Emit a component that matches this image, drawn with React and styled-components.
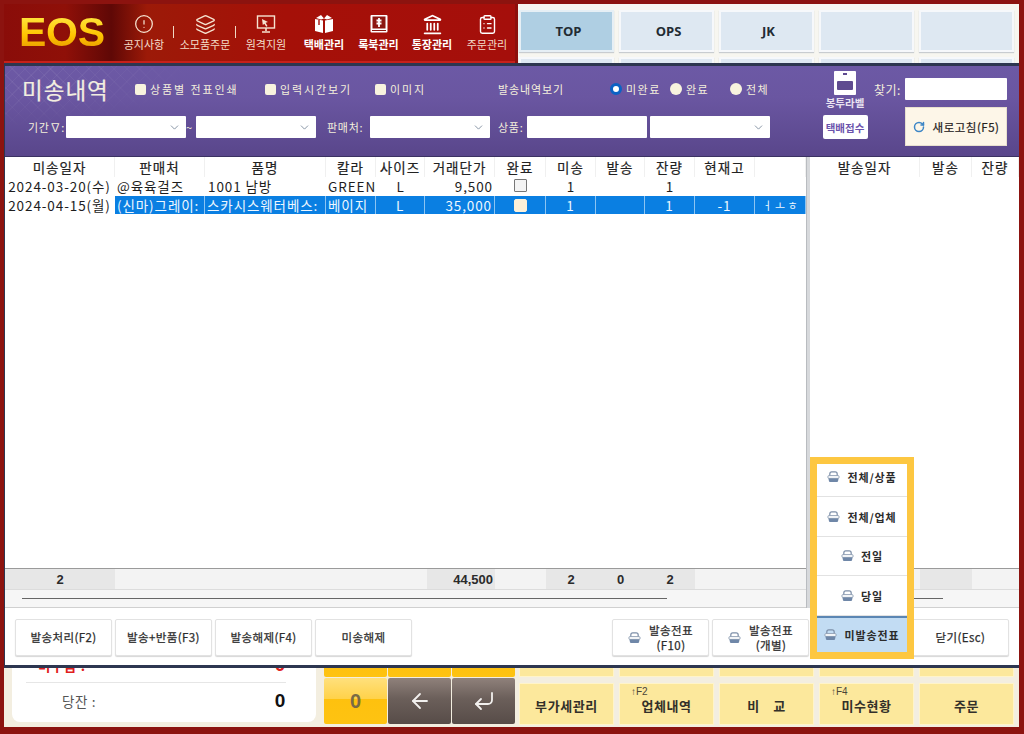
import React from 'react';
import styled, { createGlobalStyle } from 'styled-components';
import { CircleAlert, Layers, Landmark, ClipboardList, ChevronDown, RotateCw, ArrowLeft, CornerDownLeft } from 'lucide-react';

const Global = createGlobalStyle`
  html, body { margin: 0; padding: 0; background: #fff; }
  * { box-sizing: border-box; }
  body { font-family: "Liberation Sans", "Noto Sans CJK KR", sans-serif; }
`;

const Root = styled.div`
  position: relative; width: 1024px; height: 734px; overflow: hidden;
  background: #f7f3e6; border-style: solid; border-color: #8c130f; border-width: 4px 5px 7px 4px;
  box-shadow: inset 0 0 0 1px #c9201a;
  display: flex; flex-direction: column; justify-content: space-between;
`;
const Top = styled.div`display: flex; height: 59px; background: #8c0f0c; flex: none;`;
const Brand = styled.div`
  width: 511px; display: flex; align-items: stretch;
  background: linear-gradient(90deg, #8a0d09 0%, #8f1008 12%, #5f0806 21%, #9c1a08 28%, #a51008 55%, #a50f0b 100%);
  border-bottom: 2px solid #c7201a;
`;
const Logo = styled.div`
  width: 110px; padding: 6px 0 0 15px; font: bold 41px/44px "Liberation Sans", sans-serif; letter-spacing: -0.3px;
  background: linear-gradient(180deg, #ffe640 20%, #ffc400 55%, #e89a00 80%);
  -webkit-background-clip: text; background-clip: text; color: transparent;
`;
const NavItem = styled.div`
  position: relative; width: ${p => p.$w}px; display: flex; flex-direction: column; align-items: center;
  padding-top: 7px; color: ${p => p.$strong ? '#fff' : '#f3dcc8'};
  font: ${p => p.$strong ? 'bold' : 'normal'} 11px/14px "Noto Sans CJK KR", sans-serif; white-space: nowrap;
  ${p => p.$sep ? `&::after { content: ''; position: absolute; right: 0; top: 22px; height: 12px; width: 1px; background: #f0d8c4; }` : ''}
`;
const NavIcon = styled.div`height: 26px; display: flex; align-items: center; justify-content: center;`;
const TabArea = styled.div`
  margin-left: 3px; flex: 1; background: #f7f6f0; padding: 6px 0 0 1px; display: flex; flex-direction: column; gap: 5px; overflow: hidden;
`;
const TabRow = styled.div`display: flex; gap: 5px; flex: none;`;
const Tab = styled.div`
  width: 95px; height: 42px; display: flex; align-items: center; justify-content: center; padding-left: 4px;
  background: ${p => p.$on ? '#afcfe3' : '#dee8f2'}; border: 2px solid ${p => p.$on ? '#e6eff5' : '#f6f8fb'};
  box-shadow: 0 1px 1px #c8ccd0; font: bold 13px "Open Sans", "Liberation Sans", sans-serif; color: #222b33;
`;

const Bottom = styled.div`display: flex; height: 67px; padding: 0 0 3px 8px; flex: none; background: #f3eee0;`;
const Card = styled.div`width: 304px; height: 62px; background: #fff; border-radius: 0 0 8px 8px; display: flex; flex-direction: column; padding: 0 30px 0 14px;`;
const CardRow = styled.div`
  display: flex; justify-content: space-between; align-items: center; padding: 0 0 ${p => p.$pb}px ${p => p.$pad}px;
  height: ${p => p.$h}px; flex: ${p => p.$grow ? 1 : 'none'}; color: ${p => p.$red ? '#e0201c' : '#555'};
  font: ${p => p.$red ? 'bold' : 'normal'} 13.5px "Noto Sans CJK KR", sans-serif; letter-spacing: .6px;
  ${p => p.$line ? 'border-bottom: 1px solid #e6e6e6;' : ''}
`;
const CardValue = styled.span`font: bold 19px "Liberation Sans", sans-serif; color: ${p => p.$red ? '#e0201c' : '#111'};`;
const Keypad = styled.div`
  margin-left: 8px; width: 191px; display: grid; grid-template-columns: repeat(3, 63px); gap: 1px; grid-template-rows: 17px 46px;
`;
const Key = styled.div`
  display: flex; align-items: center; justify-content: center; border-radius: 2px; color: ${p => p.$dark ? '#f2f0ee' : '#7a6a45'};
  background: ${p => p.$dark ? 'linear-gradient(180deg,#8f817b 0%,#6b5f5a 45%,#574c48 100%)' : 'linear-gradient(180deg,#ffe07c 0%,#ffd24a 45%,#fec10e 46%,#fec312 100%)'};
  font: bold 20px "Liberation Sans", sans-serif;
`;
const YellowGrid = styled.div`
  margin-left: 4px; display: grid; grid-template-columns: repeat(5, 95px); column-gap: 5px; row-gap: 6px; grid-template-rows: 17px 42px;
`;
const YellowBtn = styled.div`
  position: relative; display: flex; align-items: center; justify-content: center; background: #fce89c; padding-top: 3px;
  border: 1px solid #fff4c9; font: bold 13px "Noto Sans CJK KR", sans-serif; color: #33302a; letter-spacing: .6px;
`;
const FnTag = styled.span`position: absolute; left: 11px; top: 2px; font: normal 10px "Liberation Sans", sans-serif; color: #4a4538; letter-spacing: 0;`;

const Dialog = styled.div`
  position: absolute; left: -2px; top: 59px; width: 1020px; height: 605px; border: 3px solid #2d3650;
  background: #fff; display: flex; flex-direction: column; z-index: 2;
`;
const Header = styled.div`
  position: relative; height: 91px; flex: none; display: flex; color: #f4efdc; border-bottom: 1px solid #3b3262;
  background: linear-gradient(180deg, #6c59a5 0%, #6a56a1 35%, #59468b 100%);
  font: normal 11px "Noto Sans CJK KR", sans-serif;
  &::before {
    content: ''; position: absolute; left: 0; top: 0; width: 180px; height: 60px; pointer-events: none;
    background: repeating-linear-gradient(45deg, rgba(255,255,255,.05) 0 1px, transparent 1px 9px),
      repeating-linear-gradient(-45deg, rgba(255,255,255,.05) 0 1px, transparent 1px 9px);
    -webkit-mask-image: radial-gradient(ellipse at 0 0, #000 30%, transparent 75%);
    mask-image: radial-gradient(ellipse at 0 0, #000 30%, transparent 75%);
  }
`;
const HeadMain = styled.div`position: relative; width: 785px; display: flex; flex-direction: column; flex: none;`;
const HeadRow1 = styled.div`height: 46px; display: flex; align-items: center; padding-left: 17px;`;
const Title = styled.div`width: 113px; font: normal 22.5px "Noto Sans CJK KR", sans-serif; letter-spacing: 1px; color: #f3eee0; -webkit-text-stroke: .2px #f3eee0;`;
const Opt = styled.label`display: flex; align-items: center; gap: 4px; width: ${p => p.$w}px; flex: none; letter-spacing: ${p => p.$ls || 1.9}px; white-space: nowrap;`;
const Box = styled.span`width: 11px; height: 11px; border-radius: 2px; background: #f8f3de; flex: none;`;
const Radio = styled.span`
  width: 12px; height: 12px; border-radius: 50%; flex: none; background: ${p => p.$on ? '#fff' : '#f8f3de'};
  border: ${p => p.$on ? '3.5px solid #0b62c4' : 'none'};
`;
const HeadRow2 = styled.div`height: 30px; display: flex; align-items: center; padding-left: 23px;`;
const FieldLabel = styled.span`width: ${p => p.$w}px; flex: none; margin-left: ${p => p.$ml || 0}px; letter-spacing: .7px; white-space: nowrap;`;
const Field = styled.div`
  width: 120px; height: 22px; flex: none; background: #fff; border-radius: 1px; display: flex; align-items: center; justify-content: flex-end;
  padding-right: 5px; color: #6f7f92; margin-left: ${p => p.$ml || 0}px;
`;
const Envelope = styled.div`
  width: 54px; margin-left: 28px; padding-top: 5px; flex: none; display: flex; flex-direction: column; align-items: center;
`;
const EnvLabel = styled.div`height: 20px; font: bold 10.5px/15px "Noto Sans CJK KR", sans-serif; color: #e8e2f0; white-space: nowrap;`;
const Courier = styled.div`
  width: 45px; height: 24px; background: #fff; border-radius: 2px; display: flex; align-items: center; justify-content: center;
  font: bold 10.5px "Noto Sans CJK KR", sans-serif; color: #6a52ac; white-space: nowrap;
`;
const FindCol = styled.div`width: 133px; margin-left: 2px; padding-top: 12px; display: flex; flex-direction: column; align-items: flex-end; gap: 7px;`;
const FindRow = styled.div`display: flex; align-items: center; width: 100%; justify-content: space-between; font-size: 12px; letter-spacing: .5px;`;
const FindInput = styled.div`width: 102px; height: 22px; background: #fff; border-radius: 1px;`;
const Refresh = styled.div`
  width: 102px; height: 39px; background: #fdf6e8; border: 1px solid #e8e0cf; display: flex; align-items: center; justify-content: center; gap: 8px;
  font: normal 11.5px "Noto Sans CJK KR", sans-serif; letter-spacing: .5px; color: #26221d; white-space: nowrap; -webkit-text-stroke: .2px #26221d;
`;

const Panels = styled.div`flex: 1; display: flex; min-height: 0; color: #1d1d1d;`;
const Pane = styled.div`width: ${p => p.$w}px; flex: none; display: flex; flex-direction: column;`;
const Splitter = styled.div`width: 4px; flex: none; background: #d7d9dc; border-left: 1px solid #b9bcc0;`;
const Rows = styled.div`flex: 1; min-height: 0;`;
const cols = '110px 90px 121px 50px 49px 70px 51px 50px 49px 50px 60px 51px';
const Row = styled.div`display: grid; grid-template-columns: ${p => p.$cols}; height: ${p => p.$h}px; padding-bottom: ${p => p.$pb || 0}px;`;
const Head = styled.div`
  display: flex; align-items: center; justify-content: center; font: normal 13.5px "Noto Sans CJK KR", sans-serif; letter-spacing: 1px; color: #222;
  border-right: 1px solid #f0f0f0; white-space: nowrap; overflow: hidden; padding-bottom: 1px; -webkit-text-stroke: .2px #222;
`;
const Cell = styled.div`
  display: flex; align-items: center; justify-content: ${p => p.$a || 'center'}; overflow: hidden; white-space: nowrap; padding: 0 2px 0 ${p => p.$pl || 2}px;
  font: normal ${p => p.$small ? 11 : 13.5}px "Noto Sans CJK KR", "Liberation Sans", sans-serif; letter-spacing: ${p => p.$small ? 0 : .9}px;
  background: ${p => p.$sel ? '#0a7fe2' : 'transparent'}; color: ${p => p.$sel ? '#eef7ff' : '#1d1d1d'};
  ${p => p.$sel ? 'border-right: 1px solid #8cc4f2;' : ''}
`;
const Check = styled.span`
  width: 13px; height: 13px; display: block; border-radius: ${p => p.$sel ? 2 : 1}px; background: ${p => p.$sel ? '#fdf0d8' : '#f4f4f4'};
  border: 1px solid ${p => p.$sel ? '#fdf0d8' : '#777'};
`;
const Sum = styled.div`
  height: 22px; flex: none; display: grid; grid-template-columns: ${p => p.$cols}; background: #f3f3f3;
  border-top: 1px solid #9a9a9a; border-bottom: 1px solid #dcdcdc;
`;
const SumCell = styled.div`
  display: flex; align-items: center; justify-content: ${p => p.$a || 'center'}; padding: 0 2px; margin-left: ${p => p.$ml || 0}px; font: bold 13px "Liberation Sans", sans-serif;
  color: #2b2b2b; background: ${p => p.$on ? '#e7e7e7' : 'transparent'};
`;
const Scroll = styled.div`height: 18px; flex: none; background: #f6f6f6; border-bottom: 1px solid #d0d0d0; display: flex; align-items: center; padding-left: ${p => p.$l}px;`;
const Thumb = styled.div`height: 1px; width: ${p => p.$w}px; background: #666;`;
const Bar = styled.div`height: 57px; flex: none; display: flex; justify-content: space-between; padding: 11px 10px 0; background: #fff;`;
const Group = styled.div`display: flex; gap: 3px;`;
const Btn = styled.div`
  width: 97px; height: 37px; display: flex; align-items: center; justify-content: center; gap: 8px; background: #fff;
  border: 1px solid #e2e2e2; border-radius: 2px; box-shadow: 0 1px 1px #d6d6d6; text-align: center; white-space: nowrap;
  font: normal 11.5px/15px "Noto Sans CJK KR", sans-serif; color: #2c2c2c; letter-spacing: .4px; -webkit-text-stroke: .25px #2c2c2c;
`;
const Menu = styled.div`
  position: absolute; left: 805px; top: 391px; width: 104px; height: 202px; border: 7px solid #fdc741; display: flex; flex-direction: column; z-index: 3; background: #fff;
`;
const MenuItem = styled.div`
  height: ${p => p.$h}px; flex: ${p => p.$on ? 1 : 'none'}; display: flex; align-items: center; justify-content: center; gap: 7px; padding-bottom: ${p => p.$pb || 0}px;
  font: bold 11px "Noto Sans CJK KR", sans-serif; color: #2c2c2c; letter-spacing: .9px;
  background: ${p => p.$on ? '#c2dcf3' : '#fff'}; border-top: ${p => p.$on ? '2px solid #5b86b3' : 'none'};
  border-bottom: ${p => p.$on ? 'none' : '1px solid #e2e2e2'}; white-space: nowrap;
`;

const Printer = () => (
  <svg width="13" height="12" viewBox="0 0 14 13">
    <path d="M3 6V3.2C3 1.8 4.2 1 5.2 1h3.6C9.8 1 11 1.8 11 3.2V6" fill="none" stroke="#7c8ea8" strokeWidth="1.3" />
    <rect x="1" y="5" width="12" height="3" rx="1" fill="#fff" stroke="#8a9ab0" strokeWidth="1" />
    <path d="M1.5 8h11l-.6 3.2c-.1.5-.5.8-1 .8H3.1c-.5 0-.9-.3-1-.8z" fill="#6f87a8" />
  </svg>
);
const MonitorIcon = () => (
  <svg width="20" height="20" viewBox="0 0 20 20" fill="none">
    <rect x="1.5" y="2" width="17" height="12" stroke="#f6e3d0" strokeWidth="1.4" />
    <path d="M6 5l6 3-2.4.8L11.5 12l-1.3.7-1.8-3L6.8 11z" fill="#f6e3d0" />
    <path d="M10 14v3M6 18h8" stroke="#f6e3d0" strokeWidth="1.6" />
  </svg>
);
const BoxIcon = () => (
  <svg width="22" height="20" viewBox="0 0 22 20">
    <path d="M2 5l8 1.5V19l-8-2z" fill="#fff" />
    <path d="M12 6.5L20 5v12l-8 2z" fill="#fff" />
    <path d="M3 4l5-3 3 3.6-3 .9zM19 4l-5-3-3 3.6 3 .9z" fill="#fff" />
    <path d="M6 6v5" stroke="#a50f0b" strokeWidth="1.4" />
  </svg>
);
const BookIcon = () => (
  <svg width="20" height="20" viewBox="0 0 20 20" fill="none">
    <rect x="1.5" y="1" width="17" height="17.5" rx="1" fill="#fff" />
    <rect x="3.5" y="2.5" width="13" height="12" fill="#8d1712" />
    <path d="M10 4v9M7.5 6.5h5M7.5 9.5h5" stroke="#fff" strokeWidth="1.8" />
    <path d="M3 16.5h14" stroke="#8d1712" strokeWidth="1" />
  </svg>
);
const EnvelopeIcon = () => (
  <svg width="22" height="24" viewBox="0 0 22 24">
    <rect width="22" height="24" rx="1" fill="#fff" />
    <rect x="9" y="2" width="4" height="2" fill="#5f4b90" />
    <rect x="3" y="10" width="16" height="9" rx="1" fill="#5f4b90" />
  </svg>
);

const headers = ['미송일자','판매처','품명','칼라','사이즈','거래단가','완료','미송','발송','잔량','현재고',''];
const nav = [
  { w: 60, label: '공지사항', icon: <CircleAlert size={20} color="#f6e3d0" strokeWidth={1.5} />, sep: true },
  { w: 62, label: '소모품주문', icon: <Layers size={21} color="#f6e3d0" strokeWidth={1.5} />, sep: true },
  { w: 60, label: '원격지원', icon: <MonitorIcon /> },
  { w: 56, label: '택배관리', icon: <BoxIcon />, strong: true },
  { w: 53, label: '록북관리', icon: <BookIcon />, strong: true },
  { w: 54, label: '통장관리', icon: <Landmark size={21} color="#fff" strokeWidth={2} />, strong: true },
  { w: 56, label: '주문관리', icon: <ClipboardList size={21} color="#fff" strokeWidth={1.6} /> },
];
const rightCols = '110px 52px 47px';
const chevron = <ChevronDown size={13} strokeWidth={1.5} />;

export default function App() {
  return (
    <Root>
      <Global />
      <Top>
        <Brand>
          <Logo>EOS</Logo>
          {nav.map(n => (
            <NavItem key={n.label} $w={n.w} $sep={n.sep} $strong={n.strong}>
              <NavIcon>{n.icon}</NavIcon>
              {n.label}
            </NavItem>
          ))}
        </Brand>
        <TabArea>
          <TabRow>
            <Tab $on>TOP</Tab><Tab>OPS</Tab><Tab>JK</Tab><Tab /><Tab />
          </TabRow>
          <TabRow><Tab /><Tab /><Tab /><Tab /><Tab /></TabRow>
        </TabArea>
      </Top>

      <Bottom>
        <Card>
          <CardRow $h={23} $pad={12} $pb={13} $red $line>미수금 :<CardValue $red>0</CardValue></CardRow>
          <CardRow $grow $pad={36} $pb={4}>당잔 :<CardValue>0</CardValue></CardRow>
        </Card>
        <Keypad>
          <Key /><Key /><Key />
          <Key>0</Key>
          <Key $dark><ArrowLeft size={24} strokeWidth={1.8} /></Key>
          <Key $dark><CornerDownLeft size={24} strokeWidth={1.8} /></Key>
        </Keypad>
        <YellowGrid>
          <YellowBtn /><YellowBtn /><YellowBtn /><YellowBtn /><YellowBtn />
          <YellowBtn>부가세관리</YellowBtn>
          <YellowBtn><FnTag>↑F2</FnTag>업체내역</YellowBtn>
          <YellowBtn>비　교</YellowBtn>
          <YellowBtn><FnTag>↑F4</FnTag>미수현황</YellowBtn>
          <YellowBtn>주문</YellowBtn>
        </YellowGrid>
      </Bottom>

      <Dialog>
        <Header>
          <HeadMain>
            <HeadRow1>
              <Title>미송내역</Title>
              <Opt $w={130}><Box />상품별 전표인쇄</Opt>
              <Opt $w={110}><Box />입력시간보기</Opt>
              <Opt $w={123}><Box />이미지</Opt>
              <Opt $w={112} $ls={.9}>발송내역보기</Opt>
              <Opt $w={60} $ls={1.5}><Radio $on />미완료</Opt>
              <Opt $w={60} $ls={1.4}><Radio />완료</Opt>
              <Opt $w={50} $ls={1.4}><Radio />전체</Opt>
            </HeadRow1>
            <HeadRow2>
              <FieldLabel $w={38}>기간∇:</FieldLabel>
              <Field>{chevron}</Field>
              <FieldLabel $w={10}>~</FieldLabel>
              <Field>{chevron}</Field>
              <FieldLabel $w={43} $ml={11}>판매처:</FieldLabel>
              <Field>{chevron}</Field>
              <FieldLabel $w={29} $ml={8}>상품:</FieldLabel>
              <Field />
              <Field $ml={3}>{chevron}</Field>
            </HeadRow2>
          </HeadMain>
          <Envelope>
            <EnvelopeIcon />
            <EnvLabel>봉투라벨</EnvLabel>
            <Courier>택배접수</Courier>
          </Envelope>
          <FindCol>
            <FindRow>찾기:<FindInput /></FindRow>
            <Refresh><RotateCw size={12} color="#3d86c6" strokeWidth={3} />새로고침(F5)</Refresh>
          </FindCol>
        </Header>

        <Panels>
          <Pane $w={801}>
            <Rows>
              <Row $cols={cols} $h={20}>{headers.map((h, i) => <Head key={i}>{h}</Head>)}</Row>
              <Row $cols={cols} $h={19} $pb={2}>
                <Cell $pl={1}>2024-03-20(수)</Cell>
                <Cell $a="flex-start">@육육걸즈</Cell>
                <Cell $a="flex-start" $pl={3}>1001 남방</Cell>
                <Cell $a="flex-start">GREEN</Cell>
                <Cell>L</Cell>
                <Cell $a="flex-end">9,500</Cell>
                <Cell><Check /></Cell>
                <Cell>1</Cell><Cell /><Cell>1</Cell><Cell /><Cell />
              </Row>
              <Row $cols={cols} $h={18}>
                <Cell $pl={1}>2024-04-15(월)</Cell>
                <Cell $sel $a="flex-start">(신마)그레이:</Cell>
                <Cell $sel $a="flex-start">스카시스웨터베스:</Cell>
                <Cell $sel $a="flex-start">베이지</Cell>
                <Cell $sel>L</Cell>
                <Cell $sel $a="flex-end">35,000</Cell>
                <Cell $sel><Check $sel /></Cell>
                <Cell $sel>1</Cell><Cell $sel /><Cell $sel>1</Cell><Cell $sel>-1</Cell>
                <Cell $sel $small>ㅓ ㅗ ㅎ</Cell>
              </Row>
            </Rows>
            <Sum $cols={cols}>
              <SumCell $on>2</SumCell><SumCell /><SumCell /><SumCell /><SumCell />
              <SumCell $on $a="flex-end" $ml={2}>44,500</SumCell>
              <SumCell />
              <SumCell $on>2</SumCell><SumCell $on>0</SumCell><SumCell $on>2</SumCell>
              <SumCell /><SumCell />
            </Sum>
            <Scroll $l={17}><Thumb $w={645} /></Scroll>
          </Pane>
          <Splitter />
          <Pane $w={209}>
            <Rows>
              <Row $cols={rightCols} $h={20}><Head>발송일자</Head><Head>발송</Head><Head>잔량</Head></Row>
            </Rows>
            <Sum $cols={rightCols}><SumCell /><SumCell $on /><SumCell /></Sum>
            <Scroll $l={104}><Thumb $w={29} /></Scroll>
          </Pane>
        </Panels>

        <Bar>
          <Group>
            <Btn>발송처리(F2)</Btn>
            <Btn>발송+반품(F3)</Btn>
            <Btn>발송해제(F4)</Btn>
            <Btn>미송해제</Btn>
          </Group>
          <Group>
            <Btn><Printer /><span>발송전표<br />(F10)</span></Btn>
            <Btn><Printer /><span>발송전표<br />(개별)</span></Btn>
            <Btn />
            <Btn>닫기(Esc)</Btn>
          </Group>
        </Bar>

        <Menu>
          <MenuItem $h={33} $pb={6}><Printer />전체/상품</MenuItem>
          <MenuItem $h={40}><Printer />전체/업체</MenuItem>
          <MenuItem $h={39}><Printer />전일</MenuItem>
          <MenuItem $h={40}><Printer />당일</MenuItem>
          <MenuItem $on><Printer />미발송전표</MenuItem>
        </Menu>
      </Dialog>
    </Root>
  );
}
